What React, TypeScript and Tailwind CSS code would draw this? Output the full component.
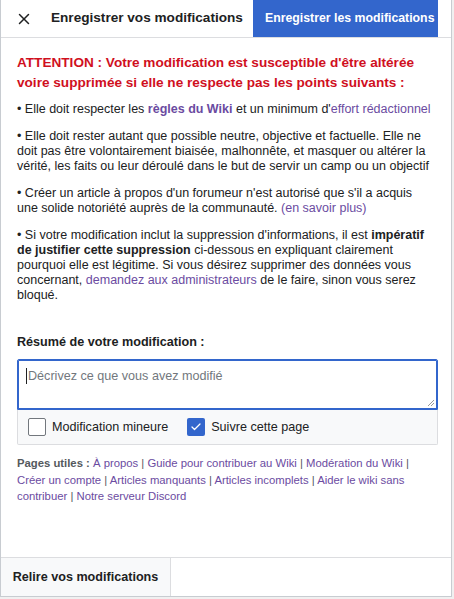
import { Check, X } from 'lucide-react';

const link = 'text-[#6b4ba1]';

const usefulPages = [
  'À propos',
  'Guide pour contribuer au Wiki',
  'Modération du Wiki',
  'Créer un compte',
  'Articles manquants',
  'Articles incomplets',
  'Aider le wiki sans contribuer',
  'Notre serveur Discord',
];

export default function App() {
  return (
    <div className="h-[599px] w-[454px] overflow-hidden bg-[#f0f0f0] font-['Liberation_Sans',Arial,sans-serif] text-[#202122]">
      <div className="flex h-[597px] w-[452px] flex-col border-x border-b border-[#c8ccd1] bg-white">
        {/* header */}
        <div className="flex h-[38px] shrink-0 items-stretch border-b border-[#dcdde0]">
          <button className="flex w-[44px] shrink-0 items-center justify-center pl-[1px]">
            <X size={18} strokeWidth={2} className="text-[#202122]" />
          </button>
          <div className="flex min-w-0 flex-1 items-center whitespace-nowrap pl-[6px] text-[13.6px] font-bold">
            Enregistrer vos modifications
          </div>
          <button className="mr-[13px] flex w-[185px] shrink-0 items-center whitespace-nowrap bg-[#3366cc] pl-[12px] text-[12.3px] font-bold text-white">
            Enregistrer les modifications
          </button>
        </div>

        {/* body */}
        <div className="flex-1 px-[16px] pt-[15px]">
          <p className="text-[13.6px] font-bold leading-[20px] text-[#d0101e]">
            ATTENTION : Votre modification est susceptible d'être altérée voire supprimée si elle ne respecte pas les points suivants :
          </p>

          <div className="mt-[9px] flex flex-col gap-[12px] text-[12.5px] leading-[15px]">
            <p>
              • Elle doit respecter les <span className={`${link} font-bold`}>règles du Wiki</span> et un minimum d'
              <span className={link}>effort rédactionnel</span>
            </p>
            <p>
              • Elle doit rester autant que possible neutre, objective et factuelle. Elle ne doit pas être volontairement biaisée,
              malhonnête, et masquer ou altérer la vérité, les faits ou leur déroulé dans le but de servir un camp ou un objectif
            </p>
            <p>
              • Créer un article à propos d'un forumeur n'est autorisé que s'il a acquis une solide notoriété auprès de la communauté.{' '}
              <span className={link}>(en savoir plus)</span>
            </p>
            <p>
              • Si votre modification inclut la suppression d'informations, il est{' '}
              <span className="font-bold">impératif de justifier cette suppression</span> ci-dessous en expliquant clairement pourquoi elle
              est légitime. Si vous désirez supprimer des données vous concernant,{' '}
              <span className={link}>demandez aux administrateurs</span> de le faire, sinon vous serez bloqué.
            </p>
          </div>

          <div className="mt-[30px] text-[12.6px] font-bold leading-[18px]">Résumé de votre modification :</div>

          <div className="mt-[8px] w-[421px]">
            <div className="relative h-[51px] rounded-t-[2px] border border-[#3366cc] bg-white shadow-[inset_0_0_0_1px_#3366cc]">
              <div className="flex items-center pl-[8px] pt-[7px] text-[12.6px] leading-[18px] text-[#72777d]">
                <span className="mr-[1px] h-[16px] w-px bg-[#202122]" />
                Décrivez ce que vous avez modifié
              </div>
              <svg className="absolute bottom-[2px] right-[2px]" width="8" height="8" viewBox="0 0 8 8">
                <path d="M7 1 L1 7 M7 4 L4 7" stroke="#999" strokeWidth="1" />
              </svg>
            </div>
            <div className="flex h-[35px] items-center rounded-b-[2px] border-x border-b border-[#dcdde0] bg-[#f8f9fa] pl-[10px] text-[12.6px]">
              <span className="h-[18px] w-[18px] rounded-[2px] border border-[#72777d] bg-white" />
              <span className="ml-[6px]">Modification mineure</span>
              <span className="ml-[19px] flex h-[18px] w-[18px] items-center justify-center rounded-[2px] bg-[#3366cc]">
                <Check size={12} strokeWidth={2.5} className="text-white" />
              </span>
              <span className="ml-[6px]">Suivre cette page</span>
            </div>
          </div>

          <p className="mt-[10px] text-[11.3px] leading-[16.5px]">
            <span className="font-bold text-[#54595d]">Pages utiles :</span>{' '}
            {usefulPages.map((page, i) => (
              <span key={page}>
                <span className={link}>{page}</span>
                {i < usefulPages.length - 1 && <span className="text-[#54595d]"> | </span>}
              </span>
            ))}
          </p>
        </div>

        {/* footer */}
        <div className="flex h-[39px] shrink-0 border-t border-[#dcdde0]">
          <button className="w-[170px] border-r border-[#dcdde0] bg-[#f8f9fa] text-[12.6px] font-bold">Relire vos modifications</button>
          <div className="flex-1" />
        </div>
      </div>
    </div>
  );
}
